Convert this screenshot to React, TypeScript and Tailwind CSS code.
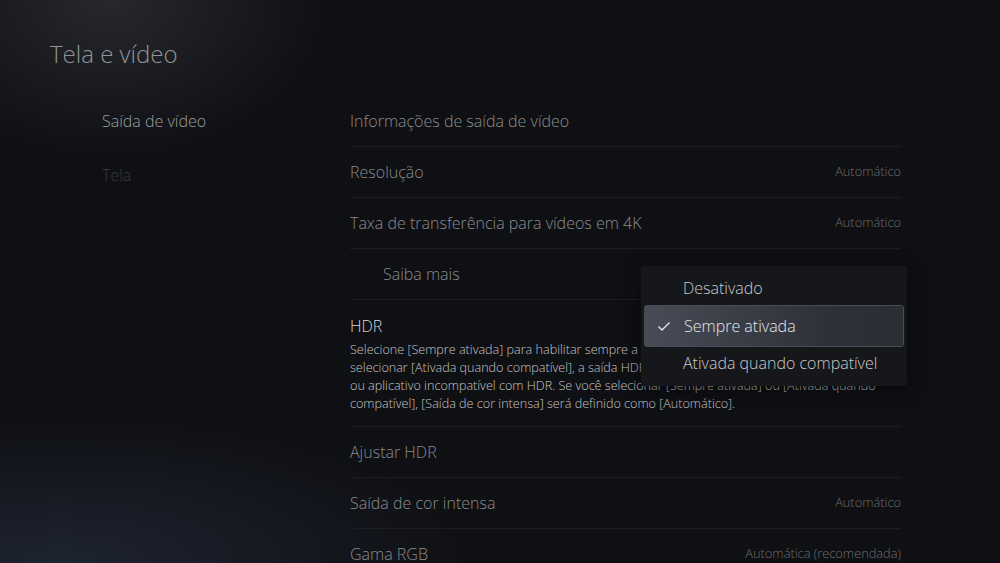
import React from "react";

type Row = {
    label: string
    value?: string
    indent?: boolean
}

const topRows: Row[] = [
    {label: "Informações de saída de vídeo"},
    {label: "Resolução", value: "Automático"},
    {label: "Taxa de transferência para vídeos em 4K", value: "Automático"},
    {label: "Saiba mais", indent: true},
];

const bottomRows: Row[] = [
    {label: "Ajustar HDR"},
    {label: "Saída de cor intensa", value: "Automático"},
    {label: "Gama RGB", value: "Automática (recomendada)"},
];

const SettingRow = ({row}: {row: Row}) => {
    return (
        <div className="flex h-[51px] items-center justify-between border-b border-[#1c1e23]">
            <span className={`text-[16px] text-[#8a8b8e] ${row.indent ? "pl-[33px]" : ""}`}>{row.label}</span>
            {row.value && <span className="text-[12.8px] text-[#6c6d70]">{row.value}</span>}
        </div>
    )
}

const App = () => {
    return (
        <div
            className="relative h-[563px] w-full overflow-hidden bg-[#0f1014] font-['Open_Sans',sans-serif] font-light"
        >
            {/* background glow */}
            <div className="pointer-events-none absolute inset-0 bg-[radial-gradient(ellipse_220px_160px_at_110px_0px,#26282d,transparent)]" />
            <div className="pointer-events-none absolute inset-0 bg-[radial-gradient(ellipse_420px_150px_at_60px_563px,#1d2330,transparent)]" />

            <div className="relative flex h-full flex-col">
                <h1 className="pl-[50px] pt-[38px] text-[24px] leading-[32px] text-[#939496]">Tela e vídeo</h1>

                <div className="mt-[26px] flex">
                    {/* left nav */}
                    <div className="-mt-[1px] w-[350px] shrink-0 pl-[102px]">
                        <div className="flex h-[51px] items-center text-[16px] text-[#9b9c9f]">Saída de vídeo</div>
                        <div className="mt-[3px] flex h-[51px] items-center text-[16px] text-[#3a3b3f]">Tela</div>
                    </div>

                    {/* settings list */}
                    <div className="relative w-[551px]">
                        {topRows.map((r) => (
                            <SettingRow key={r.label} row={r} />
                        ))}

                        <div className="border-b border-[#1c1e23] pb-[13px] pt-[14px]">
                            <div className="text-[16px] leading-[24px] text-[#d6d7d9]">HDR</div>
                            <p className="mt-[3px] text-[12.6px] leading-[18px] text-[#c5c6c8]">
                                Selecione [Sempre ativada] para habilitar sempre a saída HDR. Se você<br />
                                selecionar [Ativada quando compatível], a saída HDR será desativada no jogo<br />
                                ou aplicativo incompatível com HDR. Se você selecionar [Sempre ativada] ou [Ativada quando<br />
                                compatível], [Saída de cor intensa] será definido como [Automático].
                            </p>
                        </div>

                        {bottomRows.map((r) => (
                            <SettingRow key={r.label} row={r} />
                        ))}

                        {/* dropdown */}
                        <div className="absolute left-[291px] top-[170px] w-[266px] rounded-[2px] bg-[#16171b] px-[3px] pb-[7px] pt-[4px] shadow-[0_4px_20px_rgba(0,0,0,0.5)]">
                            <div className="flex h-[35px] items-center pl-[39px] text-[16px] text-[#c9cacc]">Desativado</div>
                            <div className="flex h-[42px] items-center rounded-[3px] border border-[#4a4d55] bg-[linear-gradient(90deg,#484c56,#2e3139_70%,#2a2d34)] pl-[11px] text-[16px] text-[#e4e5e7]">
                                <svg width="16" height="16" viewBox="0 0 16 16" className="mr-[12px]">
                                    <polyline points="2.5,8.5 6,12 13.5,4.5" fill="none" stroke="#e4e5e7" strokeWidth="1.4" />
                                </svg>
                                Sempre ativada
                            </div>
                            <div className="flex h-[32px] items-center pl-[39px] text-[16px] text-[#c9cacc]">Ativada quando compatível</div>
                        </div>
                    </div>
                </div>
            </div>
        </div>
    )
}

export default App;
